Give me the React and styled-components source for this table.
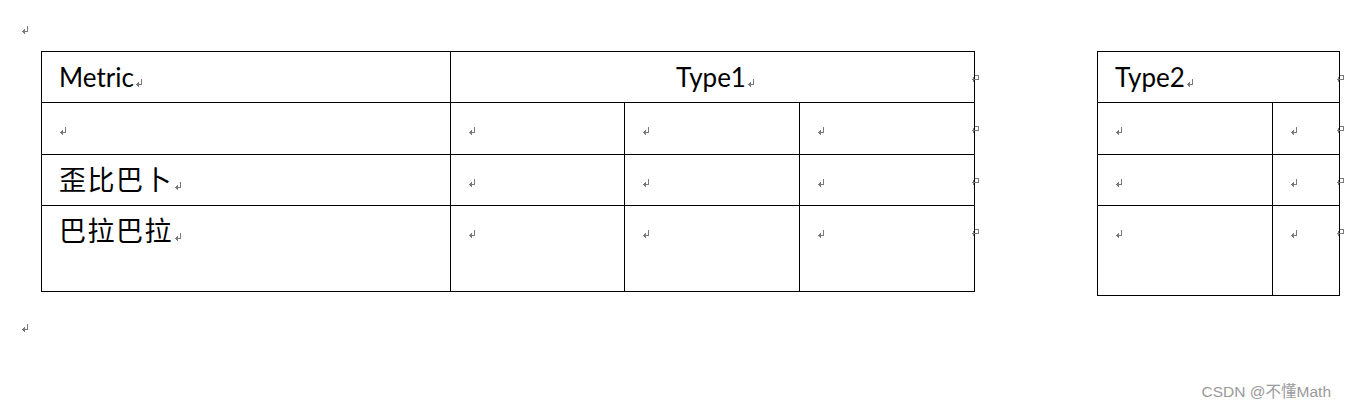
import React from "react";
import styled, { createGlobalStyle } from "styled-components";

const GlobalStyle = createGlobalStyle`
  html, body { margin: 0; padding: 0; background: #ffffff; }
  body { font-family: Lato, "Noto Sans CJK SC", sans-serif; color: #000; }
`;

const Page = styled.div`
  position: relative;
  width: 1345px;
  height: 410px;
  overflow: hidden;
  display: flex;
  flex-direction: column;
`;

const LoosePara = styled.div`
  height: ${(p) => p.$h}px;
  padding: ${(p) => p.$top}px 0 0 22px;
  box-sizing: border-box;
`;

const TablesRow = styled.div`
  display: flex;
  align-items: flex-start;
  padding-left: 41px;
`;

const Grid = styled.div`
  flex: none;
  display: grid;
  grid-template-columns: ${(p) => p.$cols};
  grid-template-rows: ${(p) => p.$rows};
  border-left: 1px solid #000;
  border-top: 1px solid #000;
`;

const Cell = styled.div`
  box-sizing: border-box;
  border-right: 1px solid #000;
  border-bottom: 1px solid #000;
  grid-column: ${(p) => p.$span || "auto"};
  padding-left: ${(p) => (p.$pl != null ? p.$pl : 17)}px;
  text-align: ${(p) => (p.$center ? "center" : "left")};
  min-width: 0;
`;

const HeadText = styled.div`
  font-family: Lato, sans-serif;
  font-size: 26px;
  line-height: 31px;
  padding-top: 10px;
  padding-left: ${(p) => (p.$center ? 6 : 0)}px;
  white-space: nowrap;
`;

const CjkText = styled.div`
  font-family: "Noto Sans CJK SC", sans-serif;
  font-size: 27px;
  letter-spacing: 1.5px;
  line-height: 27px;
  padding-top: 10px;
  white-space: nowrap;
`;

const EmptyPara = styled.div`
  padding-top: 24px;
  padding-left: 1px;
  line-height: 0;
`;

const MarkColumn = styled.div`
  flex: none;
  display: flex;
  flex-direction: column;
  width: ${(p) => p.$w}px;
  margin-left: -3px;
`;

const MarkSlot = styled.div`
  height: ${(p) => p.$h}px;
  padding-top: ${(p) => p.$top}px;
  box-sizing: border-box;
  line-height: 0;
`;

const MarkSvg = styled.svg`
  display: ${(p) => (p.$inline ? "inline-block" : "block")};
  vertical-align: baseline;
  margin-left: ${(p) => (p.$inline ? 2 : 0)}px;
`;

const Watermark = styled.div`
  position: absolute;
  right: 14px;
  bottom: 9px;
  font-family: "Liberation Sans", "Noto Sans CJK SC", sans-serif;
  font-size: 15.5px;
  line-height: 18px;
  color: #9a9a9a;
  white-space: nowrap;
`;

const ParaMark = ({ inline }) => (
  <MarkSvg $inline={inline} width="7" height="8" viewBox="0 0 7 8">
    <g fill="#7a7a7a">
      <rect x="5" y="0" width="1" height="6" />
      <rect x="1" y="5" width="5" height="1" />
      <rect x="1" y="4" width="1" height="3" />
      <rect x="0" y="5" width="1" height="1" />
      <rect x="2" y="3" width="1" height="5" />
    </g>
  </MarkSvg>
);

const RowEndMark = () => (
  <MarkSvg width="8" height="8" viewBox="0 0 8 8">
    <g fill="#7a7a7a">
      <rect x="0" y="5" width="7" height="1" />
      <rect x="1" y="3" width="1" height="5" />
      <rect x="6" y="1" width="1" height="5" />
      <rect x="3" y="1" width="4" height="1" />
    </g>
  </MarkSvg>
);

const t1Rows = [51, 52, 51, 86];
const t2Rows = [51, 52, 51, 90];

const EmptyCell = () => (
  <Cell>
    <EmptyPara>
      <ParaMark />
    </EmptyPara>
  </Cell>
);

const RowMarks = ({ rows, width }) => (
  <MarkColumn $w={width}>
    <MarkSlot $h={1} $top={0} />
    {rows.map((h, i) => (
      <MarkSlot key={i} $h={h} $top={22}>
        <RowEndMark />
      </MarkSlot>
    ))}
  </MarkColumn>
);

export default function App() {
  return (
    <Page>
      <GlobalStyle />
      <LoosePara $h={51} $top={26}>
        <ParaMark />
      </LoosePara>
      <TablesRow>
        <Grid $cols="409px 174px 175px 175px" $rows={t1Rows.map((r) => r + "px").join(" ")}>
          <Cell>
            <HeadText>
              Metric
              <ParaMark inline />
            </HeadText>
          </Cell>
          <Cell $span="span 3" $center $pl={0}>
            <HeadText $center>
              Type1
              <ParaMark inline />
            </HeadText>
          </Cell>

          <EmptyCell />
          <EmptyCell />
          <EmptyCell />
          <EmptyCell />

          <Cell>
            <CjkText>
              歪比巴卜
              <ParaMark inline />
            </CjkText>
          </Cell>
          <EmptyCell />
          <EmptyCell />
          <EmptyCell />

          <Cell>
            <CjkText>
              巴拉巴拉
              <ParaMark inline />
            </CjkText>
          </Cell>
          <EmptyCell />
          <EmptyCell />
          <EmptyCell />
        </Grid>
        <RowMarks rows={t1Rows} width={125} />
        <Grid $cols="175px 67px" $rows={t2Rows.map((r) => r + "px").join(" ")}>
          <Cell $span="span 2">
            <HeadText>
              Type2
              <ParaMark inline />
            </HeadText>
          </Cell>
          <EmptyCell />
          <EmptyCell />
          <EmptyCell />
          <EmptyCell />
          <EmptyCell />
          <EmptyCell />
        </Grid>
        <RowMarks rows={t2Rows} width={8} />
      </TablesRow>
      <LoosePara $h={40} $top={28}>
        <ParaMark />
      </LoosePara>
      <Watermark>CSDN @不懂Math</Watermark>
    </Page>
  );
}
